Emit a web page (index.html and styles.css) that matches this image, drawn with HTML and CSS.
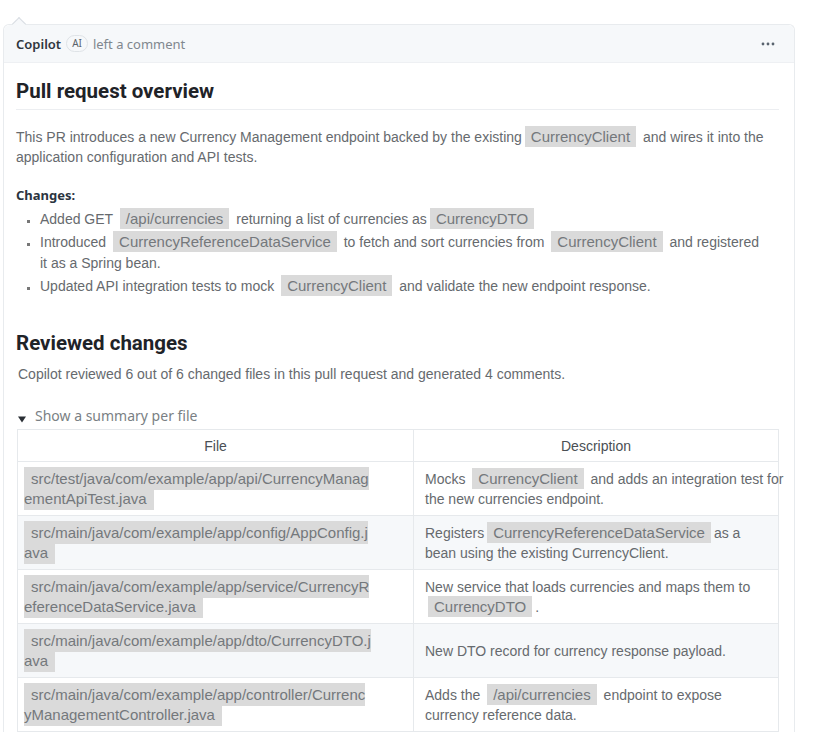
FILE: index.html
```html
<!DOCTYPE html>
<html lang="en">
<head>
  <meta charset="UTF-8">
  <meta name="viewport" content="width=device-width, initial-scale=1.0">
  <title>Copilot review</title>
  <link rel="stylesheet" href="styles.css">
</head>
<body>
  <div class="comment">
    <div class="comment-header">
      <span class="author">Copilot</span>
      <span class="badge">AI</span>
      <span class="action">left a comment</span>
      <svg class="kebab" width="16" height="16" viewBox="0 0 16 16"><circle cx="3" cy="8" r="1.4"/><circle cx="8" cy="8" r="1.4"/><circle cx="13" cy="8" r="1.4"/></svg>
    </div>

    <div class="comment-body">
      <h2 class="title underlined">Pull request overview</h2>
      <p class="intro">This PR introduces a new Currency Management endpoint backed by the existing<code>CurrencyClient</code> and wires it into the application configuration and API tests.</p>

      <h3 class="subtitle">Changes:</h3>
      <ul class="changes">
        <li>Added GET <code>/api/currencies</code> returning a list of currencies as<code>CurrencyDTO</code></li>
        <li>Introduced <code>CurrencyReferenceDataService</code> to fetch and sort currencies from <code>CurrencyClient</code> and registered it as a Spring bean.</li>
        <li>Updated API integration tests to mock <code>CurrencyClient</code> and validate the new endpoint response.</li>
      </ul>

      <h2 class="title reviewed">Reviewed changes</h2>
      <p class="summary">Copilot reviewed 6 out of 6 changed files in this pull request and generated 4 comments.</p>

      <details class="per-file" open>
        <summary>
          <svg class="caret" width="10" height="10" viewBox="0 0 10 10"><path d="M1 2.5h8L5 8.5z"/></svg>
          Show a summary per file
        </summary>
        <table class="files">
          <thead>
            <tr><th class="col-file">File</th><th>Description</th></tr>
          </thead>
          <tbody>
            <tr>
              <td class="path"><code>src/test/java/com/example/app/api/CurrencyManagementApiTest.java</code></td>
              <td class="desc"><span class="nowrap">Mocks <code>CurrencyClient</code> and adds an integration test for</span><br>the new currencies endpoint.</td>
            </tr>
            <tr>
              <td class="path"><code>src/main/java/com/example/app/config/AppConfig.java</code></td>
              <td class="desc">Registers<code>CurrencyReferenceDataService</code>as a bean using the existing CurrencyClient.</td>
            </tr>
            <tr>
              <td class="path"><code>src/main/java/com/example/app/service/CurrencyReferenceDataService.java</code></td>
              <td class="desc">New service that loads currencies and maps them to <code>CurrencyDTO</code>.</td>
            </tr>
            <tr>
              <td class="path"><code>src/main/java/com/example/app/dto/CurrencyDTO.java</code></td>
              <td class="desc">New DTO record for currency response payload.</td>
            </tr>
            <tr>
              <td class="path"><code>src/main/java/com/example/app/controller/CurrencyManagementController.java</code></td>
              <td class="desc">Adds the <code>/api/currencies</code> endpoint to expose currency reference data.</td>
            </tr>
          </tbody>
        </table>
      </details>
    </div>
  </div>
</body>
</html>
```

FILE: styles.css
```css
body {
  margin: 0;
  background: #fff;
  font-family: "Liberation Sans", Arial, sans-serif;
  font-size: 14px;
  color: #666a6e;
}

.comment {
  position: relative;
  margin: 24px 37px 0 3px;
  border: 1px solid #e8ebee;
  border-bottom: none;
  border-radius: 6px 6px 0 0;
}

/* little pointer towards the avatar */
.comment::before {
  content: "";
  position: absolute;
  top: -6px;
  left: 10px;
  width: 9px;
  height: 9px;
  background: #f6f8fa;
  border-top: 1px solid #d8dde2;
  border-left: 1px solid #d8dde2;
  transform: rotate(45deg);
}

.comment-header {
  display: flex;
  align-items: center;
  height: 37px;
  padding: 0 12px;
  background: #f6f8fa;
  border-bottom: 1px solid #eef0f3;
  border-radius: 6px 6px 0 0;
  font-family: "Noto Sans", sans-serif;
  font-size: 13px;
}

.author {
  font-weight: 600;
  color: #2f363d;
}

.badge {
  margin: 0 5px;
  padding: 0 5px;
  border: 1px solid #dfe3e7;
  border-radius: 10px;
  font-size: 10px;
  line-height: 15px;
  color: #5b636b;
}

.action {
  color: #80878e;
}

.kebab {
  margin-left: auto;
  margin-right: 6px;
  fill: #59636e;
}

.comment-body {
  padding: 16px 15px 0 12px;
}

.title {
  margin: 0;
  font-family: Roboto, "Noto Sans", sans-serif;
  font-size: 20.5px;
  font-weight: 700;
  line-height: 25px;
  color: #1f2328;
}

.underlined {
  padding-bottom: 5px;
  border-bottom: 1px solid #eceef1;
}

.intro {
  margin: 17px 0 0;
  line-height: 20px;
}

code {
  font-family: "Liberation Sans", Arial, sans-serif;
  font-size: 15px;
  line-height: 1;
  color: #74787c;
  background: #dadada;
  padding: 2px 6px;
  margin: 0 3px;
}

.subtitle {
  margin: 18px 0 0;
  font-family: "Noto Sans", sans-serif;
  font-size: 13px;
  font-weight: 700;
  line-height: 20px;
  color: #2b3440;
}

.changes {
  margin: 4px 0 0;
  padding: 0 13px 0 24px;
  list-style: square;
  line-height: 21px;
}

.changes li + li {
  margin-top: 2px;
}

.changes li::marker {
  font-size: 11px;
  color: #777;
}

.reviewed {
  margin-top: 34px;
}

.summary {
  margin: 8px 0 0 2px;
  line-height: 20px;
}

.per-file {
  margin-top: 22px;
}

.per-file summary {
  list-style: none;
  display: flex;
  align-items: center;
  gap: 8px;
  padding-left: 1px;
  font-family: "Noto Sans", sans-serif;
  font-size: 14px;
  line-height: 20px;
  color: #7a7f84;
  cursor: pointer;
}

.per-file summary::-webkit-details-marker {
  display: none;
}

.caret {
  margin-top: 5px;
  fill: #2a2f35;
}

.files {
  margin: 3px 0 0 1px;
  width: 762px;
  border-collapse: collapse;
  table-layout: fixed;
}

.files th,
.files td {
  border: 1px solid #e6e9ec;
  line-height: 20px;
  vertical-align: middle;
}

.files th {
  padding: 6px 6px 5px;
  font-weight: 400;
  color: #4a4f54;
}

.col-file {
  width: 383px;
}

.files tbody tr:nth-child(even) {
  background: #f6f8fa;
}

.path {
  padding: 7px 41px 6px 6px;
  word-break: break-all;
}

.path code {
  margin: 0;
  padding: 3px 7px;
}

.desc {
  padding: 7px 7px 6px 11px;
}

.nowrap {
  white-space: nowrap;
}
```
